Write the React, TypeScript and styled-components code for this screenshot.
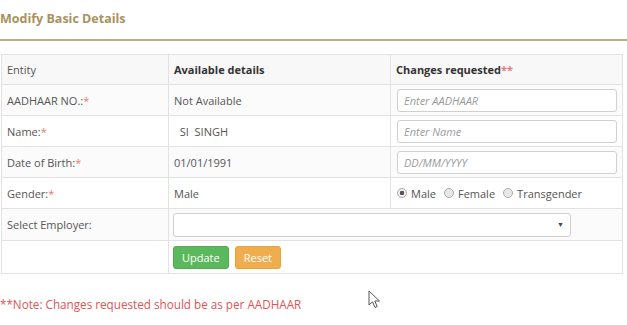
import React from "react"
import styled, { createGlobalStyle } from "styled-components"

const GlobalStyle = createGlobalStyle`
  html, body {
    margin: 0;
    padding: 0;
    background: #ffffff;
  }
  body {
    font-family: "Open Sans", "Segoe UI", Arial, sans-serif;
    font-size: 11px;
    color: #555;
  }
`

const rows = [
  { label: "AADHAAR NO.:", value: "Not Available", placeholder: "Enter AADHAAR" },
  { label: "Name:", value: "\u00a0\u00a0SI\u00a0\u00a0SINGH", placeholder: "Enter Name" },
  { label: "Date of Birth:", value: "01/01/1991", placeholder: "DD/MM/YYYY" },
]

const App: React.FC = () => {
  return (
    <>
      <GlobalStyle />
      <Page>
        <Title>Modify Basic Details</Title>
        <Table>
          <colgroup>
            <col style={{ width: 167 }} />
            <col style={{ width: 222 }} />
            <col />
          </colgroup>
          <thead>
            <HeadRow>
              <Cell>Entity</Cell>
              <HeadCell>Available details</HeadCell>
              <HeadCell>
                Changes requested<Req>**</Req>
              </HeadCell>
            </HeadRow>
          </thead>
          <tbody>
            {rows.map((r) => (
              <Row key={r.label} $h={31}>
                <Cell>
                  {r.label}
                  <Req>*</Req>
                </Cell>
                <Cell>{r.value}</Cell>
                <InputCell>
                  <TextInput placeholder={r.placeholder} />
                </InputCell>
              </Row>
            ))}
            <Row $h={31}>
              <Cell>
                Gender:<Req>*</Req>
              </Cell>
              <Cell>Male</Cell>
              <InputCell>
                <Radios>
                  <RadioLabel>
                    <Radio $on />
                    Male
                  </RadioLabel>
                  <RadioLabel>
                    <Radio />
                    Female
                  </RadioLabel>
                  <RadioLabel>
                    <Radio />
                    Transgender
                  </RadioLabel>
                </Radios>
              </InputCell>
            </Row>
            <Row $h={32}>
              <Cell>Select Employer:</Cell>
              <SpanCell colSpan={2}>
                <SelectBox>
                  <Arrow>▼</Arrow>
                </SelectBox>
              </SpanCell>
            </Row>
            <Row $h={33}>
              <Cell />
              <SpanCell colSpan={2}>
                <Buttons>
                  <Button $bg="#5cb85c" $border="#4cae4c">Update</Button>
                  <Button $bg="#f0ad4e" $border="#eea236">Reset</Button>
                </Buttons>
              </SpanCell>
            </Row>
          </tbody>
        </Table>
        <Note>**Note: Changes requested should be as per AADHAAR</Note>
        <Cursor width="13" height="20" viewBox="0 0 13 20">
          <path
            d="M1 1 L1 15 L4.5 11.8 L7 17.5 L9.2 16.5 L6.8 11 L11.5 11 Z"
            fill="#fff"
            stroke="#555"
            strokeWidth="1"
            strokeLinejoin="round"
          />
        </Cursor>
      </Page>
    </>
  )
}

const Page = styled.div`
  position: relative;
  width: 627px;
  height: 325px;
  overflow: hidden;
`

const Title = styled.div`
  height: 29px;
  padding-top: 10px;
  box-sizing: content-box;
  font-size: 12.5px;
  font-weight: 700;
  color: #a8925f;
  border-bottom: 2px solid #bfae80;
  line-height: 17px;
`

const Table = styled.table`
  margin: 13px 0 0 1px;
  width: 622px;
  border-collapse: collapse;
  table-layout: fixed;
  border: 1px solid #e2e2e2;
`

const Row = styled.tr<{ $h: number }>`
  height: ${(p) => p.$h}px;
  &:nth-child(odd) {
    background: #fbfbfb;
  }
`

const HeadRow = styled.tr`
  height: 30px;
  background: #f8f8f8;
`

const Cell = styled.td`
  padding: 0 5px;
  border: 1px solid #e2e2e2;
  vertical-align: middle;
  color: #555;
  white-space: nowrap;
`

const HeadCell = styled(Cell)`
  font-weight: 700;
  color: #333;
`

const InputCell = styled(Cell)`
  padding: 0 6px;
`

const SpanCell = styled(Cell)`
  padding: 0 4px;
`

const Req = styled.span`
  color: #e87a7a;
`

const TextInput = styled.input`
  display: block;
  box-sizing: border-box;
  width: 220px;
  height: 23px;
  padding: 0 6px;
  border: 1px solid #d0d0d0;
  border-radius: 3px;
  font-family: inherit;
  font-size: 11px;
  background: #fff;
  &::placeholder {
    color: #9a9a9a;
    font-style: italic;
  }
`

const Radios = styled.div`
  display: flex;
  gap: 8px;
  align-items: center;
`

const RadioLabel = styled.label`
  display: flex;
  align-items: center;
  gap: 4px;
  color: #555;
`

const Radio = styled.span<{ $on?: boolean }>`
  display: inline-block;
  box-sizing: border-box;
  width: 10px;
  height: 10px;
  border-radius: 50%;
  border: 1px solid #aaa;
  background: ${(p) =>
    p.$on ? "radial-gradient(circle, #555 0 2px, #eee 2.5px)" : "#e8e8e8"};
`

const SelectBox = styled.div`
  position: relative;
  box-sizing: border-box;
  width: 398px;
  height: 24px;
  border: 1px solid #d0d0d0;
  border-radius: 3px;
  background: #fff;
`

const Arrow = styled.span`
  position: absolute;
  right: 6px;
  top: 6px;
  font-size: 7px;
  color: #444;
`

const Buttons = styled.div`
  display: flex;
  gap: 6px;
`

const Button = styled.button<{ $bg: string; $border: string }>`
  height: 23px;
  padding: 0 8px;
  border: 1px solid ${(p) => p.$border};
  border-radius: 3px;
  background: ${(p) => p.$bg};
  color: #fff;
  font-family: inherit;
  font-size: 11px;
`

const Note = styled.div`
  margin-top: 22px;
  color: #e05555;
  font-size: 11.7px;
`

const Cursor = styled.svg`
  position: absolute;
  left: 368px;
  top: 290px;
`

export default App
